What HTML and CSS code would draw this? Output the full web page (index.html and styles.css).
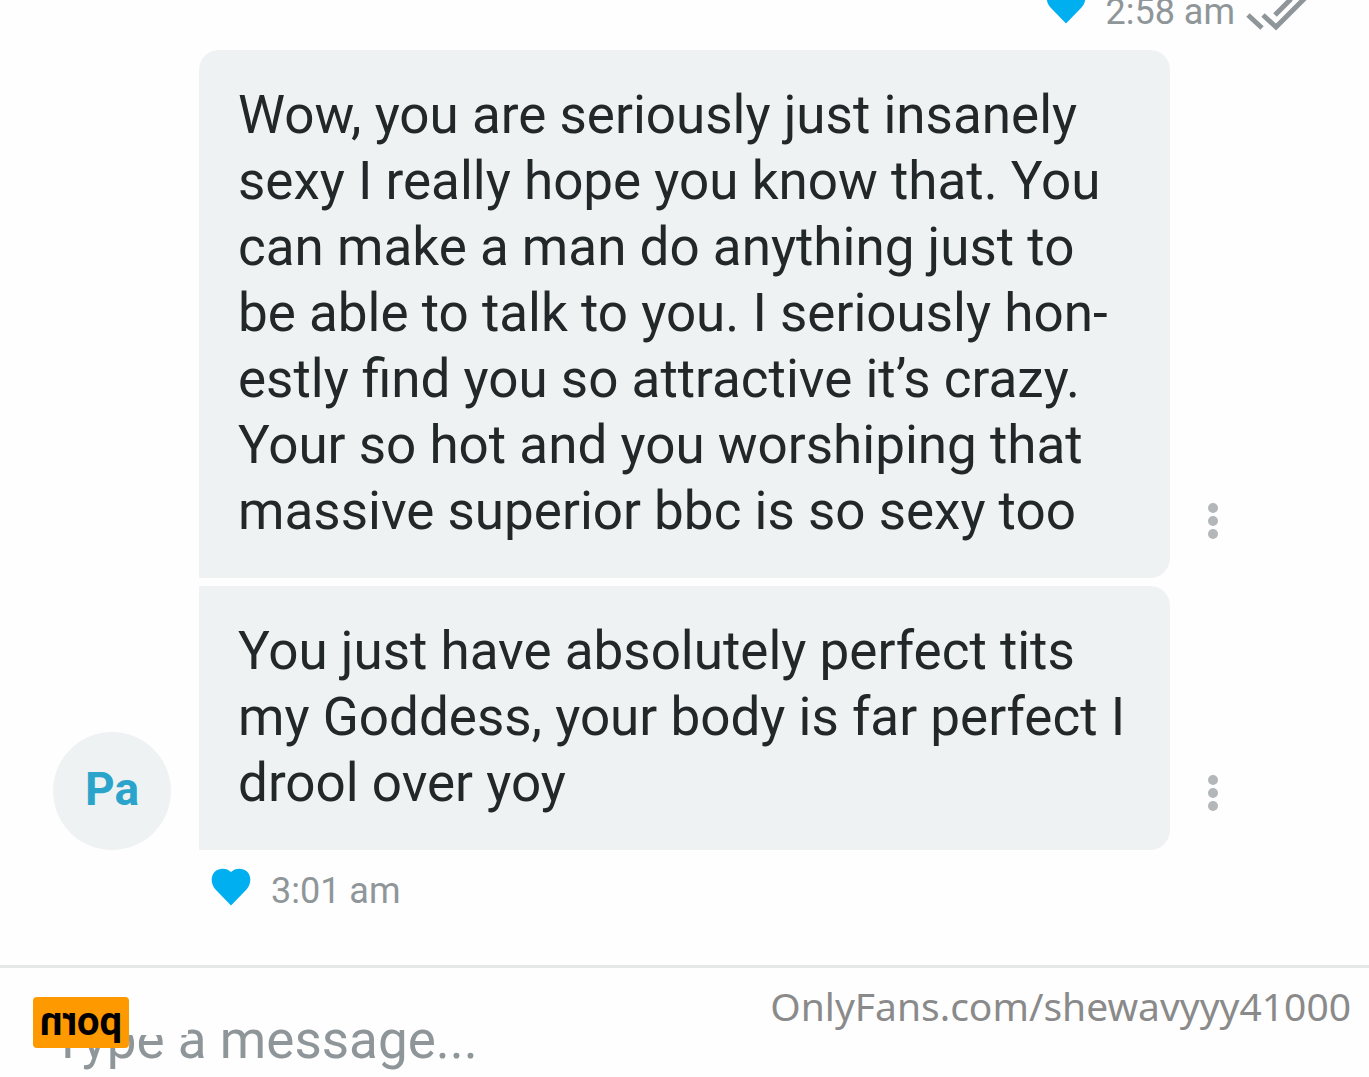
FILE: index.html
```
<!DOCTYPE html>
<html lang="en">
<head>
    <meta charset="UTF-8">
    <meta name="viewport" content="width=device-width, initial-scale=1.0">
    <title>Messages</title>
    <link rel="stylesheet" href="styles.css">
</head>
<body>
    <main class="chat">
        <div class="meta meta-sent">
            <svg class="heart" viewBox="0 0 40 38" aria-hidden="true">
                <path d="M20 37.500L4.500 21.500C-.5 16-.5 8 4 3.500C8.500-.5 16-.3 20 4C24-.3 31.500-.5 36 3.500C40.500 8 40.500 16 35.500 21.500Z"/>
            </svg>
            <time>2:58 am</time>
            <svg class="checks" viewBox="0 0 62 36" aria-hidden="true">
                <path d="M3 19L17 32M18 19L31 31L61 1M30 19L46 3"/>
            </svg>
        </div>

        <div class="message">
            <p class="bubble">Wow, you are seriously just insanely<br>sexy I really hope you know that. You<br>can make a man do anything just to<br>be able to talk to you. I seriously hon-<br>estly find you so attractive it’s crazy.<br>Your so hot and you worshiping that<br>massive superior bbc is so sexy too</p>
            <button class="more" type="button" aria-label="More">
                <svg viewBox="0 0 10 36" aria-hidden="true">
                    <circle cx="5" cy="5" r="5"/>
                    <circle cx="5" cy="18" r="5"/>
                    <circle cx="5" cy="31" r="5"/>
                </svg>
            </button>
        </div>

        <div class="message">
            <div class="avatar">Pa</div>
            <p class="bubble">You just have absolutely perfect tits<br>my Goddess, your body is far perfect I<br>drool over yoy</p>
            <button class="more" type="button" aria-label="More">
                <svg viewBox="0 0 10 36" aria-hidden="true">
                    <circle cx="5" cy="5" r="5"/>
                    <circle cx="5" cy="18" r="5"/>
                    <circle cx="5" cy="31" r="5"/>
                </svg>
            </button>
        </div>

        <div class="meta meta-received">
            <svg class="heart" viewBox="0 0 40 38" aria-hidden="true">
                <path d="M20 37.500L4.500 21.500C-.5 16-.5 8 4 3.500C8.500-.5 16-.3 20 4C24-.3 31.500-.5 36 3.500C40.500 8 40.500 16 35.500 21.500Z"/>
            </svg>
            <time>3:01 am</time>
        </div>
    </main>

    <form class="composer">
        <input class="composer-input" type="text" placeholder="Type a message..." aria-label="Type a message">
        <div class="stamp">
            <span class="stamp-label">porn</span>
        </div>
        <span class="watermark">OnlyFans.com/shewavyyy41000</span>
    </form>
</body>
</html>
```

FILE: styles.css
```
* {
    box-sizing: border-box;
}

body {
    margin: 0;
    min-height: 100vh;
    display: flex;
    flex-direction: column;
    overflow: hidden;
    background-color: #fefefe;
    color: #222829;
    font-family: Roboto, sans-serif;
}

.chat {
    flex: 1;
    display: flex;
    flex-direction: column;
}

.meta {
    display: flex;
    align-items: center;
    color: #8f9699;
    font-size: 36px;
    line-height: 44px;
}

/* the top row is scrolled partly out of view */
.meta-sent {
    height: 50px;
    padding: 0 62px 26px 0;
    justify-content: flex-end;
    align-items: flex-end;
}

.meta-sent time {
    margin: 0 10px -10px 20px;
}

.meta-received {
    padding: 18px 211px 0;
    gap: 20px;
}

.meta-received .heart {
    margin-bottom: 8px;
}

.heart {
    width: 40px;
    height: 38px;
    flex: none;
    fill: #00aff0;
}

.checks {
    width: 62px;
    height: 36px;
    flex: none;
    margin-bottom: -8px;
    fill: none;
    stroke: #8f9699;
    stroke-width: 5;
}

.message {
    display: grid;
    grid-template-columns: 199px 1fr 199px;
    align-items: end;
    margin-bottom: 8px;
}

.message:nth-last-child(2) {
    margin-bottom: 0;
}

.avatar {
    grid-column: 1;
    justify-self: end;
    width: 118px;
    height: 118px;
    margin-right: 28px;
    border-radius: 50%;
    background-color: #eff2f3;
    color: #2ba4cc;
    font-size: 46px;
    font-weight: 700;
    line-height: 114px;
    text-align: center;
}

.bubble {
    grid-column: 2;
    margin: 0;
    padding: 32px 0 34px 39px;
    border-radius: 0 20px 20px 0;
    background-color: #eef2f3;
    font-size: 53px;
    line-height: 66px;
    white-space: nowrap;
}

.meta-sent + .message .bubble {
    border-top-left-radius: 20px;
}

.more {
    grid-column: 3;
    width: 30px;
    height: 56px;
    margin: 0 0 29px 28px;
    padding: 10px;
    border: 0;
    background: none;
    cursor: pointer;
}

.more svg {
    display: block;
    width: 10px;
    height: 36px;
    fill: #b3b7b9;
}

.composer {
    position: relative;
    height: 112px;
    border-top: 3px solid #e6e8e8;
}

.composer-input {
    width: 100%;
    height: 100%;
    padding: 34px 52px 0;
    border: 0;
    outline: 0;
    background: none;
    color: #222829;
    font-family: Roboto, sans-serif;
    font-size: 53px;
}

.composer-input::placeholder {
    color: #8f9699;
    opacity: 1;
}

/* white plate with the mirrored label on its left end */
.stamp {
    position: absolute;
    top: 29px;
    left: 33px;
    width: 155px;
    height: 38px;
    background-color: #fefefe;
}

.stamp-label {
    display: block;
    width: 96px;
    height: 51px;
    border-radius: 4px;
    background-color: #ff9900;
    color: #000;
    font-family: Roboto, sans-serif;
    font-size: 40px;
    font-weight: 700;
    line-height: 50px;
    text-align: center;
    transform: scaleX(-1);
}

.watermark {
    position: absolute;
    top: 10px;
    right: 18px;
    color: #8a8a8a;
    font-family: "Noto Sans", sans-serif;
    font-size: 39px;
    line-height: 56px;
}
```
